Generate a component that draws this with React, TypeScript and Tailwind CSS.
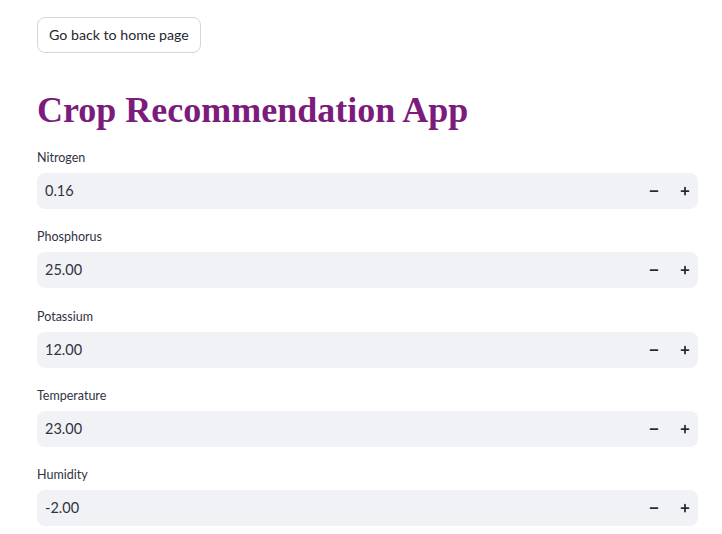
import { Minus, Plus } from "lucide-react";

const fields = [
  { label: "Nitrogen", value: "0.16" },
  { label: "Phosphorus", value: "25.00" },
  { label: "Potassium", value: "12.00" },
  { label: "Temperature", value: "23.00" },
  { label: "Humidity", value: "-2.00" },
];

function NumberField({ label, value }: { label: string; value: string }) {
  return (
    <div className="flex flex-col">
      <label className="text-[12.5px] text-[#31333f] leading-[20px] mb-[5px]">{label}</label>
      <div className="flex items-center h-[36px] rounded-lg bg-[#f0f2f6]">
        <span className="flex-1 pl-[8px] text-[14.5px] text-[#31333f]">{value}</span>
        <button className="w-[31px] h-full flex items-center justify-center text-[#262730]">
          <Minus size={12} strokeWidth={3.5} />
        </button>
        <button className="w-[31px] h-full flex items-center justify-center text-[#262730] mr-[-2px]">
          <Plus size={12} strokeWidth={3.5} />
        </button>
      </div>
    </div>
  );
}

export default function App() {
  return (
    <main className="min-h-screen bg-white pl-[37px] pr-[24px] pt-[17px] font-['Lato','Liberation_Sans',sans-serif]">
      <button className="h-[36px] px-[11px] rounded-lg border border-[#d6d6d9] bg-white text-[14.2px] text-[#262730]">
        Go back to home page
      </button>
      <h1 className="mt-[35px] mb-[16px] font-['Liberation_Serif','Times_New_Roman',serif] font-bold text-[36px] leading-[44px] text-[#7b1c7d]">
        Crop Recommendation App
      </h1>
      <div className="flex flex-col gap-[18.25px]">
        {fields.map((f) => (
          <NumberField key={f.label} label={f.label} value={f.value} />
        ))}
      </div>
    </main>
  );
}
